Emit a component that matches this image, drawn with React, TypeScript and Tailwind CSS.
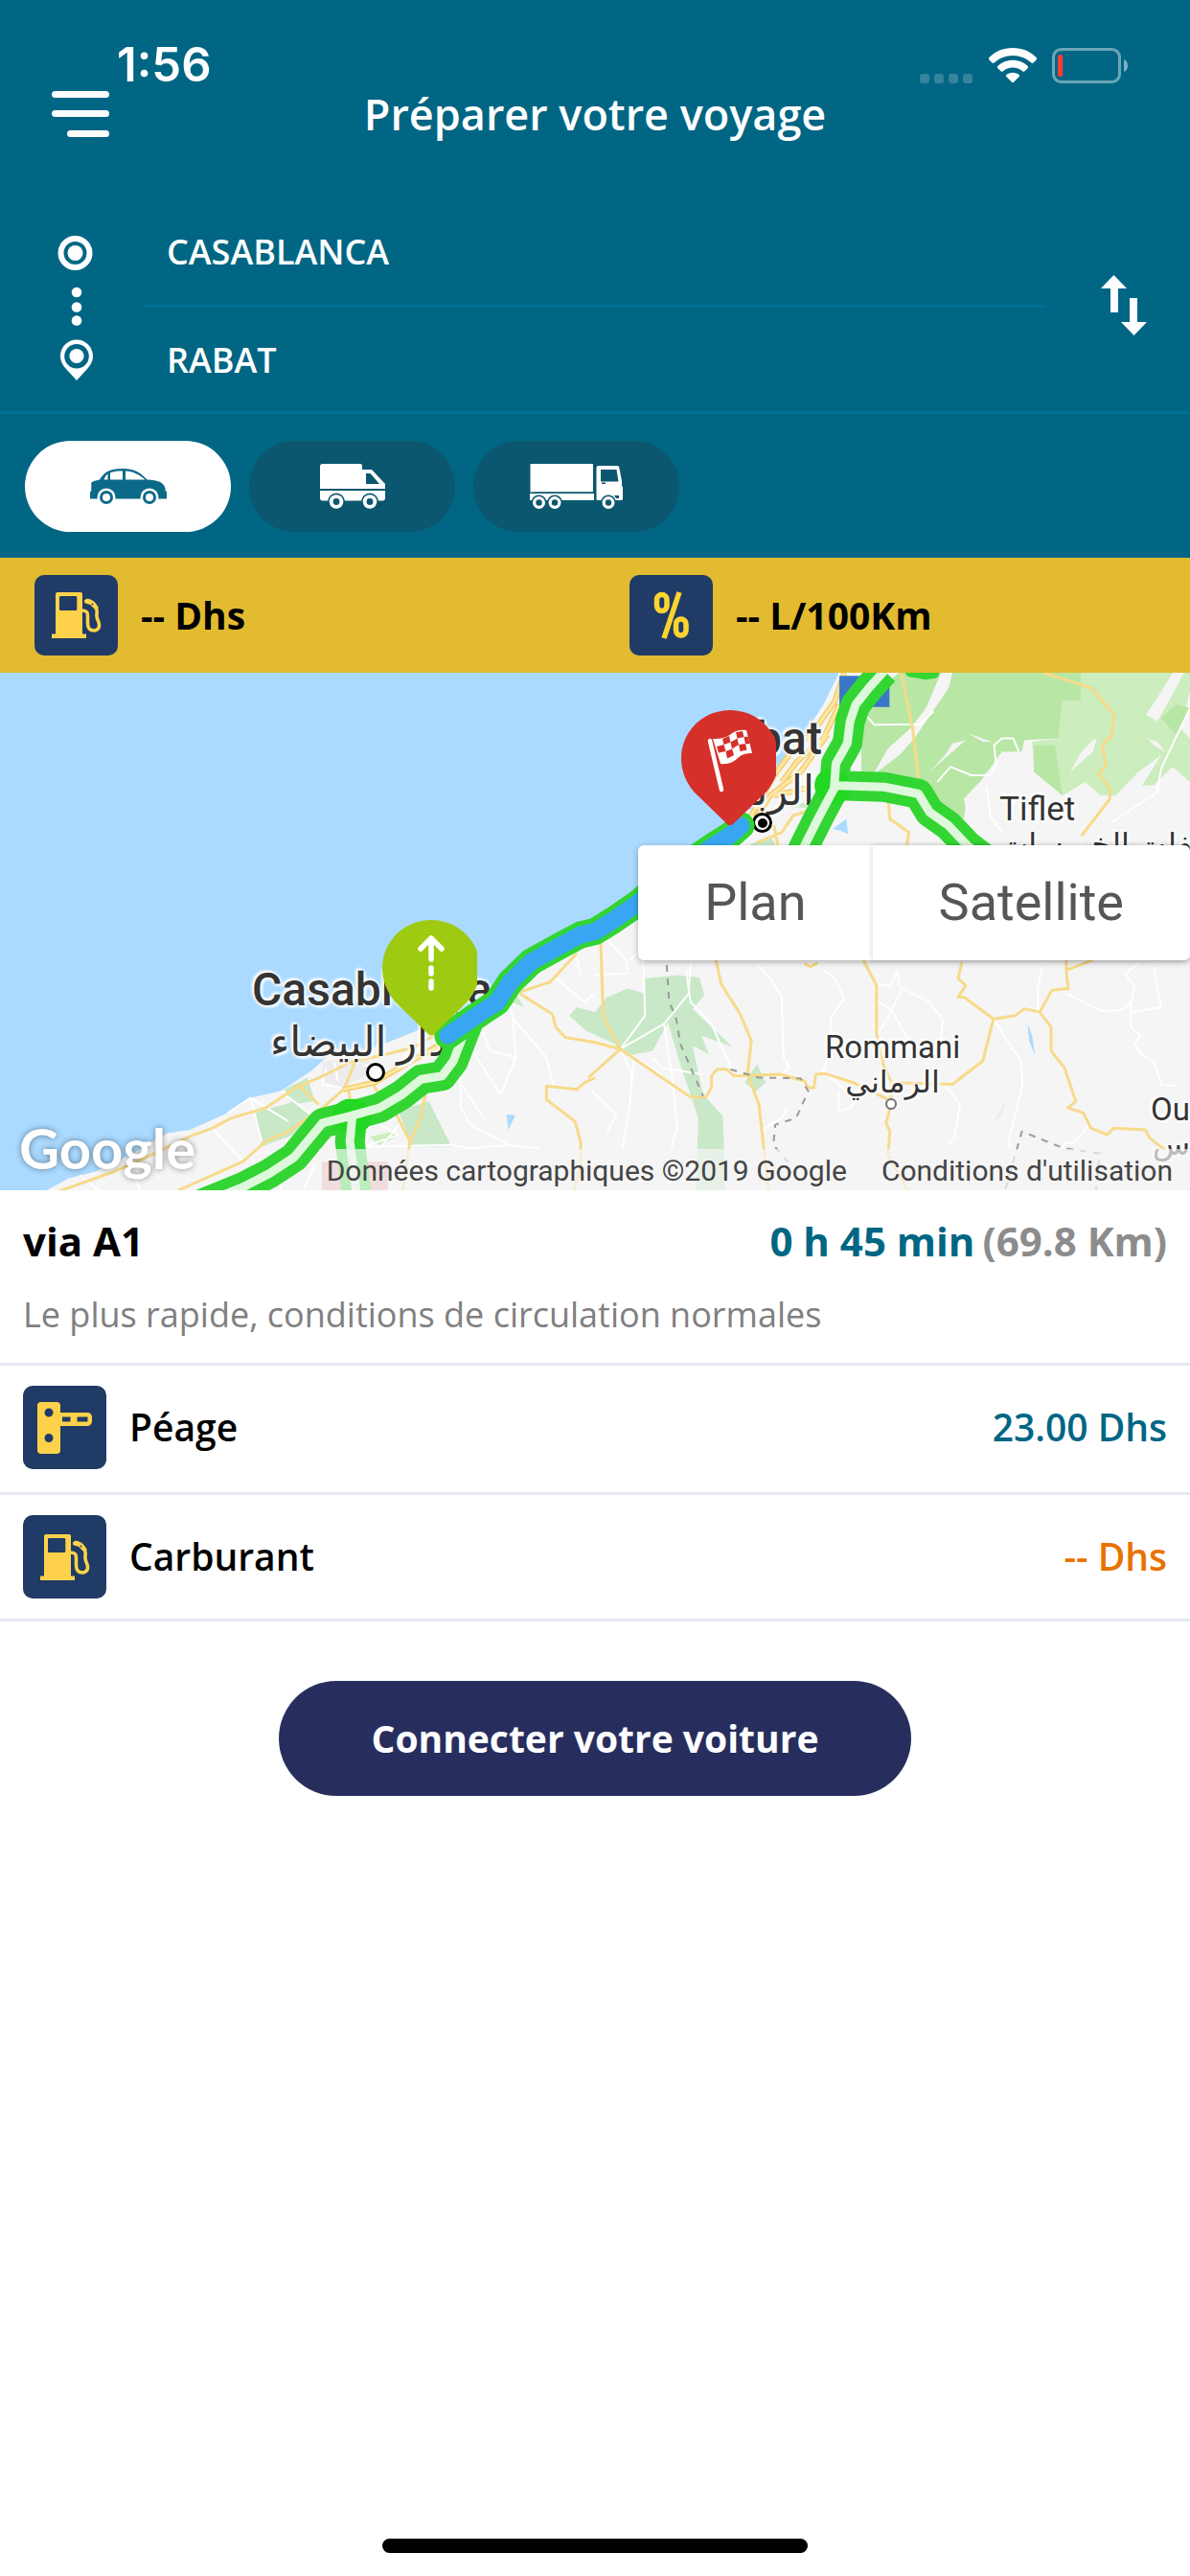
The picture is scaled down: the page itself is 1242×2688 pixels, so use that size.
import React, { useState } from "react";
import { clsx } from "clsx";

type Vehicle = "car" | "van" | "truck";
type MapKind = "plan" | "satellite";

function SignalDots() {
  return (
    <svg viewBox="0 0 56 10" className="w-14 h-[10px] fill-white/20" aria-hidden="true">
      {[0, 15, 30, 45].map((x) => (
        <rect key={x} x={x} width="10" height="10" rx="3" />
      ))}
    </svg>
  );
}

function WifiIcon() {
  return (
    <svg viewBox="0 0 50 37" className="w-[50px] h-[37px] fill-white" aria-hidden="true">
      <path d="M25 0C15 0 6.500 3.700.6 9.800c-.8.800-.8 1.900-.1 2.600l3 3.100c.6.600 1.500.6 2.100 0C10.600 10.700 17.400 7.900 25 7.900s14.400 2.800 19.400 7.600c.6.600 1.500.6 2.100 0l3-3.100c.7-.7.7-1.800-.1-2.600C43.500 3.700 35 0 25 0Z" />
      <path d="M25 12.700c-6 0-11.500 2.300-15.500 6-.8.800-.8 1.800-.1 2.500l3.100 3.100c.6.600 1.400.6 2.100.1 2.800-2.400 6.400-3.900 10.400-3.900s7.600 1.500 10.400 3.900c.7.500 1.500.5 2.100-.1l3.100-3.100c.7-.7.7-1.700-.1-2.500-4-3.700-9.500-6-15.500-6Z" />
      <path d="M25 25.800c-2.500 0-4.800.9-6.600 2.300-.7.600-.7 1.400-.1 2l5.500 5.500c.7.700 1.700.7 2.400 0l5.500-5.500c.6-.6.6-1.400-.1-2-1.800-1.400-4.100-2.300-6.600-2.300Z" />
    </svg>
  );
}

function BatteryIcon() {
  return (
    <svg viewBox="0 0 79 37" className="w-[79px] h-[37px]" aria-hidden="true">
      <rect x="1.500" y="1.500" width="69" height="34" rx="8" fill="none" stroke="#fff" strokeOpacity=".42" strokeWidth="3" />
      <rect x="6" y="7" width="5" height="23" rx="2" fill="#ff3b30" />
      <path d="M75 12c2.700 1.200 4 3.500 4 6.500S77.700 23.800 75 25Z" fill="#fff" fillOpacity=".5" />
    </svg>
  );
}

function MenuIcon() {
  return (
    <svg viewBox="0 0 60 48" className="w-[60px] h-12 fill-white" aria-hidden="true">
      <rect y="0" width="60" height="7" rx="3.500" />
      <rect y="20" width="60" height="7" rx="3.500" />
      <rect x="16" y="41" width="44" height="7" rx="3.500" />
    </svg>
  );
}

function RouteSteps() {
  return (
    <svg viewBox="0 0 48 158" className="w-12 h-[158px] fill-white" aria-hidden="true">
      <circle cx="22.500" cy="25" r="15" fill="none" stroke="#fff" strokeWidth="6" />
      <circle cx="22.500" cy="25" r="8" />
      <circle cx="24" cy="66" r="5.300" />
      <circle cx="24" cy="81.500" r="5.300" />
      <circle cx="24" cy="95.500" r="5.300" />
      <path
        fillRule="evenodd"
        d="M24 115.500c-9.400 0-17 7.600-17 17 0 5.500 2.600 9.500 6 13.500l11 12 11-12c3.400-4 6-8 6-13.500 0-9.400-7.600-17-17-17Zm0 4.500a12.800 12.800 0 1 1 0 25.600 12.800 12.800 0 0 1 0-25.600Z"
      />
      <circle cx="24" cy="132.500" r="7.600" />
    </svg>
  );
}

function SwapIcon() {
  return (
    <svg viewBox="0 0 48 63" className="w-12 h-[63px] fill-white" aria-hidden="true">
      <path d="M13.500 0 27 14h-9v25h-8V14H0Z" />
      <path d="M34.500 63 21 49h9V24h8v25h10Z" />
    </svg>
  );
}

function CarIcon() {
  return (
    <svg viewBox="0 0 80 37" className="w-20 h-[37px]" aria-hidden="true">
      <path
        fill="#0c6a89"
        d="M0 24.500 1.300 23v-8.500L4 13l6-1.500C15 4 19 0 34 0c13 0 18 4 25.500 11.500C71 12 77 14 78.500 21v2L80 24v7.500H0Z"
      />
      <path fill="#fff" d="M14.500 11.500c1-3 2.500-5 4-6v6ZM21 11.500V4.300c3.500-1.400 8-1.800 13-1.800v9ZM37 2.500c8.500.5 13.500 3.500 20.500 9H37Z" />
      {[17, 62].map((cx) => (
        <g key={cx}>
          <circle cx={cx} cy="30" r="9.500" fill="#fff" />
          <circle cx={cx} cy="30" r="7" fill="#0c6a89" />
          <circle cx={cx} cy="30" r="4" fill="#fff" />
        </g>
      ))}
    </svg>
  );
}

function VanIcon() {
  return (
    <svg viewBox="0 0 68 47" className="w-[68px] h-[47px]" aria-hidden="true">
      <path fill="#fff" d="M2.500 0H42c1.500 0 2 1 2 2v4h9c1 0 1.500.5 2 1l13 14v5H0V2.500C0 1 1 0 2.500 0ZM0 28h68v8c0 1.500-1 2.500-2.500 2.500h-63C1 38.500 0 37.500 0 36Z" />
      <path fill="#0b576f" d="M48 10h4.500l9.500 11H48Z" />
      {[17, 52].map((cx) => (
        <g key={cx}>
          <circle cx={cx} cy="39.500" r="9" fill="#0b576f" />
          <circle cx={cx} cy="39.500" r="7.300" fill="#fff" />
          <circle cx={cx} cy="39.500" r="3.400" fill="#0b576f" />
        </g>
      ))}
    </svg>
  );
}

function TruckIcon() {
  return (
    <svg viewBox="0 0 97 47" className="w-[97px] h-[47px]" aria-hidden="true">
      <path fill="#fff" d="M.5 0H66v29.500H.5ZM0 31h67v7H0Zm69.500-27c0-1 .5-2 2-2H91c1 0 2 .5 2.300 2L96 18v5l1 1v13l-1 1H71c-1 0-1.500-.5-1.500-1Z" />
      <path fill="#0b576f" d="M74 6h16.500l2 12.500H74ZM75 19.500h4V21h-4ZM88 33h5v3h-3ZM3.500 29.500H66V31H3.500Z" />
      {[9.500, 26, 82].map((cx) => (
        <g key={cx}>
          <circle cx={cx} cy="40.500" r="8" fill="#0b576f" />
          <circle cx={cx} cy="40.500" r="6.500" fill="#fff" />
          <circle cx={cx} cy="40.500" r="3.200" fill="#0b576f" />
        </g>
      ))}
    </svg>
  );
}

function FuelIcon() {
  return (
    <svg viewBox="0 0 52 48" className="w-[52px] h-12" aria-hidden="true">
      <path fill="#fdd24a" fillRule="evenodd" d="M6 0h24c1.200 0 2 .8 2 2v41.500h4V48H0v-4.500h4V2c0-1.200.8-2 2-2Zm3.500 4c-1 0-1.500.5-1.500 1.500v12c0 1 .5 1.500 1.500 1.500h15.300c1 0 1.500-.5 1.500-1.500v-12c0-1-.5-1.500-1.500-1.500Z" />
      <path fill="none" stroke="#fdd24a" strokeWidth="3.600" strokeLinecap="round" d="M31.500 19c4 0 6 1 6 5v8c0 5 2 8 6.500 8s6.500-4 5-8.500c-1-3-2.500-5-2-8.500.4-3 .5-5-1-7.500" />
      <path fill="#fdd24a" d="m34 8.500 2.200-1.700c3-.3 7 1.500 9.300 4.200l3.500 5-4.500 1.500-4.500-4.700c-2-.3-4.500-.8-6-2.300Z" />
      <circle cx="42.500" cy="12.500" r=".9" fill="#1f3b66" />
    </svg>
  );
}

function PercentIcon() {
  return (
    <svg viewBox="0 0 38 50" className="w-[38px] h-[50px]" fill="none" stroke="#fdd42f" aria-hidden="true">
      <rect x="3.500" y="3.500" width="10.500" height="17" rx="5.200" strokeWidth="5.500" />
      <rect x="23.500" y="29" width="10.500" height="17" rx="5.200" strokeWidth="5.500" />
      <path d="M27 1 11 49" strokeWidth="5.500" />
    </svg>
  );
}

function TollIcon() {
  return (
    <svg viewBox="0 0 57 54" className="w-[57px] h-[54px]" aria-hidden="true">
      <path
        fill="#fdd24a"
        fillRule="evenodd"
        d="M3.500 0h17c2 0 3.500 1.500 3.500 3.500V11h28c2.800 0 5 2 5 4.500V20c0 2.800-2.200 5-5 5H24v25.500c0 2-1.500 3.500-3.500 3.500h-17C1.500 54 0 52.500 0 50.500v-47C0 1.500 1.500 0 3.500 0ZM12 6.500a4.500 4.500 0 1 0 0 9 4.500 4.500 0 0 0 0-9Zm0 26.500a4.500 4.500 0 1 0 0 9 4.500 4.500 0 0 0 0-9ZM26 15.500v5h8.500v-5Zm15.500 0v5h11v-5Z"
      />
    </svg>
  );
}

function IconTile({ children, className }: { children: React.ReactNode; className?: string }) {
  return (
    <span className={clsx("flex items-center justify-center w-[87px] shrink-0 rounded-[10px] bg-[#1f3b66]", className)}>
      {children}
    </span>
  );
}

const yellowRoads = [
  "M125 1560 300 1490 380 1450 500 1385 560 1360 610 1330 700 1300 780 1240 860 1200 920 1165 1000 1145 1090 1120 1180 1060 1270 985",
  "M470 1545 640 1460 700 1400 760 1370 850 1300 905 1245 985 1225 1050 1180 1160 1120",
  "M920 1250 925 1310M785 1230 840 1290M935 1165 910 1235M980 1225 1000 1260",
  "M1125 1240 1105 1340 1080 1400 1060 1560M1040 1310 1085 1410",
  "M1370 955 1450 925 1520 840M1370 960 1455 1020 1465 1060 1490 1090 1568 1105 1635 1125",
  "M1568 1210 1540 1225 1520 1245 1440 1235 1440 1275 1515 1340 1530 1400 1530 1470 1510 1560",
  "M1583 810 1590 1030 1635 1125 1550 1210",
  "M1635 1125 1770 1230 1820 1268 1860 1268 1875 1240 1875 1205 1890 1185 1915 1185 1935 1205 2055 1200 2120 1220 2130 1240 2145 1240 2150 1200 2175 1198 2250 1225 2350 1280",
  "M1885 850 1900 930 1950 1020 1980 1100 1970 1200 2000 1290 2025 1545",
  "M2275 860 2310 935 2310 1080 2330 1180 2350 1225 2510 1230 2590 1160 2618 1035 2540 970 2525 970 2545 935 2525 915 2535 865",
  "M2618 1035 2675 1025 2700 1005 2740 1015 2770 1060 2770 1130 2805 1180 2835 1280 2815 1300 2855 1315 2875 1360 2918 1380 2935 1360 3018 1365 3030 1390 3070 1425",
  "M2740 1015 2772 950 2815 945 2810 890 2880 860M2810 890V860",
  "M2348 1230 2348 1290 2335 1345 2345 1370 2340 1440 2395 1550",
  "M2375 5 2385 60 2405 170 2420 320M2340 370 2345 440 2395 480 2390 520",
  "M2750 5 2875 50 2935 130 2930 190 2905 220 2915 280 2895 305 2925 350 2925 380 2850 490",
  "M1995 510 2060 480 2090 430 2150 410M2040 460 2050 520M2120 870 2135 880 2155 868",
];

const cityRoads = [
  "M2225 5 2200 90 2150 170 2080 250 2040 310 1980 430",
  "M2212 100 2170 200 2100 270 2060 330",
  "M2180 190 2110 300 2030 370 1990 440",
  "M2040 370 2120 350 2140 345",
  "M905 1245 985 1225 1170 1105",
];

const whiteRoads = [
  "M210 1500 260 1545M330 1450 370 1545M560 1360 640 1460M660 1270 690 1400M600 1315 660 1270 760 1340M740 1250 830 1330",
  "M860 1180 850 1230 900 1240M880 1160 890 1220M960 1170 1000 1190M1000 1350 1050 1380 960 1415 1190 1410 1240 1420 1340 1410 1420 1420",
  "M1000 1420 1060 1340M800 1545 830 1470M730 1430 740 1545M1100 1430 1140 1545",
  "M1210 1140 1215 1300 1240 1350 1340 1410M1215 1230 1280 1340M1250 1140 1320 1260M1320 1260 1360 1150 1350 1020 1330 960",
  "M1350 1030 1440 1150 1460 1240M1360 1150 1290 1130 1270 1060M1460 910 1540 985 1568 960M1520 850 1530 910",
  "M1600 800 1650 860 1655 900 1568 905M1660 860 1690 830",
  "M1635 1125 1700 1025 1695 860M1635 1125 1750 1050 1815 960 1820 870M1635 1125 1730 1190 1770 1240M1635 1125 1665 1200 1660 1290 1640 1420",
  "M1808 890 1820 985 1875 1050 1930 1190M1750 1050 1770 1200 1785 1350 1770 1420M1560 1250 1625 1320 1600 1370M1720 1150 1740 1180 1850 1200M1670 1160 1660 1290",
  "M1995 870 2040 930 2060 970 2065 1150 2080 1180 2050 1210M2170 890 2200 915 2225 975 2190 1030 2190 1120 2170 1190 2240 1260",
  "M2310 935 2345 935 2365 895 2370 940 2450 985 2485 1040 2480 1100M2310 980 2350 1010 2400 1110M2375 950 2345 1020 2310 1085",
  "M2210 1250 2210 1310 2240 1300 2270 1250M2010 1365 2060 1330 2075 1300M2490 1230 2530 1290 2515 1390 2500 1410",
  "M2620 1040 2690 1160 2695 1230 2660 1390 2660 1420M2735 1010 2735 950 2745 880",
  "M2810 960 2900 1010 2950 1010 2980 990 2990 940 2965 900 3000 870M2980 990 2980 1060 3005 1085 2990 1110 3005 1140 3040 1160 3060 1230 3100 1235M3040 880 3060 1000 2985 1015",
  "M2870 1350 2835 1400 2805 1405 2800 1420",
  "M2280 130 2305 160 2425 158 2460 120M2505 285 2560 310 2610 310 2625 280 2620 220 2640 200 2670 200 2685 240",
  "M3136 110 3060 290 3050 360 2970 420 2930 450M2600 345 2610 430 2640 480M2505 285 2470 330",
];

function Terrain() {
  return (
    <svg
      viewBox="0 5 3136 1540"
      preserveAspectRatio="none"
      className="absolute inset-0 w-full h-full [&_path]:[vector-effect:non-scaling-stroke]"
      strokeLinejoin="round"
      aria-hidden="true"
    >
      <path fill="#f5f5f5" d="M115 1550 180 1510 250 1490 350 1435 440 1375 500 1365 600 1315 660 1270 740 1250 820 1190 860 1150 960 1130 1010 1110 1110 1065 1180 1030 1270 970 1400 850 1568 760 1682 670 1850 510 1940 430 2000 400 2050 270 2130 170 2170 100 2205 20 2210 5H3136V1545Z" />
      <path fill="#ececec" d="M850 1165 960 1135 990 1190 900 1240 850 1220ZM2615 1350 2650 1280 2640 1320Z" />

      {/* Forests */}
      <path fill="#b8e6a5" d="M2270 110 2330 40 2370 5H2848V88H2800L2790 200 2700 205 2690 250 2600 300 2545 400 2540 440 2495 410 2430 330 2270 300Z" />
      <path fill="#ccedbd" d="M2848 5H3136V60L3110 170 3136 200V330L3090 285 3040 340 3010 340 3060 250 3000 300 2940 370 2900 370 2860 330 2800 370 2725 300 2720 210 2790 200 2800 88H2848Z" />
      <path fill="#b8e6a5" d="M2725 220H2780L2800 370 2725 300ZM3060 140 3100 100 3136 110 3100 190Z" />
      <path fill="#f5f5f5" d="M2480 5H2510L2500 50 2410 200 2370 250 2300 310 2340 230 2400 170 2440 110ZM2700 240 2670 300 2600 330 2550 440 2540 380 2590 320 2640 240ZM3090 5H3120L3080 90 3050 150 3020 130 3050 80ZM2550 185 2590 210 2615 212 2575 195ZM3025 200 3050 210 3070 240 3040 220ZM2510 215 2545 205 2450 300 2490 250ZM2880 205 2890 200 2880 240 2820 300 2850 240Z" />
      <path fill="#c8e8c8" d="M1698 915 1788 905 1843 912 1856 965 1825 1005 1930 1118 1848 1085 1868 1140 1825 1115 1853 1260 1905 1325 1912 1545H1835L1840 1330 1790 1160 1760 1045 1720 1130 1650 1145 1620 1110 1545 1070 1500 1025 1520 1000 1568 1015 1600 970 1655 945 1698 960Z" />
      <path fill="#c8e8c8" d="M1962 1225 1995 1170 2018 1225 1993 1250ZM670 1315 780 1280 845 1350 690 1415ZM750 1245 810 1210 830 1280 770 1290ZM1050 1310 1130 1280 1190 1415H1085ZM1320 970 1360 960 1380 1000ZM1970 520 2030 490 2045 520ZM2080 395 2140 390 2140 405 2085 408Z" />
      <path fill="#ccedbd" d="M975 1385 1040 1370 1055 1380 1000 1412Z" />
      <path fill="#aadaff" d="M2195 470 2230 440 2235 485 2215 475ZM1335 1320 1358 1322 1340 1365ZM2708 1050 2720 1085 2728 1145 2712 1100ZM2045 290 2060 240 2085 250 2060 290Z" />

      <path fill="none" stroke="#fff" strokeWidth="2" d={whiteRoads.join("")} />
      <path fill="none" stroke="#f7da8a" strokeWidth="3" d={yellowRoads.join("")} />
      <path fill="none" stroke="#f3cd6d" strokeWidth="6" d={cityRoads.join("")} />
      <path fill="none" stroke="#fce7a4" strokeWidth="3" d={cityRoads.join("")} />
      <path
        fill="none"
        stroke="#9a9a9a"
        strokeWidth="2"
        strokeDasharray="7 7"
        d="M1757 875 1763 980 1783 1040 1793 1110 1853 1265M1925 1185 2000 1210 2110 1212 2130 1250 2098 1330 2043 1350 2038 1410 2088 1475M2650 1540 2693 1370 2803 1420 2898 1435 2888 1545"
      />
      <path fill="#e8a3a8" d="M848 1460H1023V1545H848Z" />
      <path fill="#3a76c8" d="M2212 14H2344V107H2212Z" />
    </svg>
  );
}

function TrafficLines() {
  const motorway =
    "M500 1600 645 1533 710 1495 775 1447 850 1345 920 1325 1000 1300 1060 1260 1110 1215 1165 1205 1195 1160 1222 1080 1240 1030M928 1330 922 1400 940 1560M2330 0 2290 50 2255 100 2240 150 2233 215 2203 275 2198 350 2160 430 2120 520 2090 590M2190 340 2330 345 2420 365 2450 420 2500 460 2550 520 2620 580";
  const trip = "M1180 1085 1250 1030 1310 985 1345 925 1400 865 1480 815 1530 785 1568 775 1618 740 1682 690 1790 590 1880 520 1925 488 1953 460";
  return (
    <svg
      viewBox="0 5 3136 1540"
      preserveAspectRatio="none"
      className="absolute inset-0 w-full h-full [&_path]:[vector-effect:non-scaling-stroke]"
      fill="none"
      strokeLinejoin="round"
      aria-hidden="true"
    >
      <path stroke="#32d532" strokeWidth="12" strokeLinecap="round" d="M2400 0 2440 8 2460 5" />
      <path stroke="#32d532" strokeWidth="31" d={motorway} />
      <path stroke="#22d822" strokeWidth="36" strokeLinecap="round" d="M920 1325 935 1325M2192 340 2198 345" />
      <path stroke="#def8dc" strokeWidth="9" d={motorway} />
      <path stroke="#32d532" strokeWidth="28" strokeLinecap="round" d={trip} />
      <path stroke="#38a6f2" strokeWidth="18" strokeLinecap="round" d={trip} />
    </svg>
  );
}

function StartPin() {
  return (
    <svg viewBox="0 0 99 120" className="absolute left-[399px] top-[258px] w-[99px] h-[120px]" aria-hidden="true">
      <path fill="#9ecb11" d="M51 0c28 0 51 22 51 50 0 14-5 25-13 35l-36 35h-4L13 85C5 75 0 64 0 50 0 22 23 0 51 0Z" />
      <path fill="none" stroke="#fff" strokeWidth="5.500" strokeLinecap="round" strokeLinejoin="round" d="M51 41V19M40 30l11-11 11 11M51 50v6M51 64v7" />
    </svg>
  );
}

function FinishPin() {
  return (
    <svg viewBox="0 0 99 120" className="absolute left-[711px] top-[39px] w-[99px] h-[120px]" aria-hidden="true">
      <path fill="#d6302a" d="M51 0c28 0 51 22 51 50 0 14-5 25-13 35l-36 35h-4L13 85C5 75 0 64 0 50 0 22 23 0 51 0Z" />
      <path fill="none" stroke="#fff" strokeWidth="4.500" strokeLinecap="round" d="M30 32 42 83" />
      <path fill="#fff" d="M33 30c8 0 14-1 19-5s10-5 16-4l6 24c-6 0-11 1-15 5-5 5-11 7-18 6Z" />
      <path fill="#d6302a" d="m43 30 7-3 1.500 6.500-7 2.500ZM57 23l7-1 1.500 6-7 1.500ZM37 38l7.500-2 2 7-7.500 1.500ZM51.500 33.500l7-4 1.500 6.500-7 4.500ZM65.500 28l4-.5 2 7.500-4.500.5ZM46.500 43l6.500-2.500 2 6.500-7 3.500ZM60 36l7-1 1.500 6.500-7 1.500Z" />
    </svg>
  );
}

const halo = "[text-shadow:0_0_4px_#fff,0_0_4px_#fff,2px_2px_3px_#fff,-2px_-2px_3px_#fff]";

function MapLabels() {
  return (
    <div className={clsx("absolute inset-0 font-[Roboto,'DejaVu_Sans',sans-serif] text-[#343434] whitespace-nowrap", halo)}>
      <div className="absolute left-[263px] top-[304px] flex flex-col items-center text-[48px] leading-[54px] font-medium">
        <span>Casablanca</span>
        <span className="text-[43px] font-normal" dir="rtl" lang="ar">الدار البيضاء</span>
      </div>
      <span className="absolute left-[382px] top-[407px] w-5 h-5 rounded-full border-[3px] border-black bg-white" />

      <div className="absolute left-[733px] top-[42px] flex flex-col items-end text-[48px] leading-[54px] font-medium">
        <span>Rabat</span>
        <span className="text-[43px] pr-2 font-normal" dir="rtl" lang="ar">الرباط</span>
      </div>
      <span className="absolute left-[785px] top-[146px] flex items-center justify-center w-[21px] h-[21px] rounded-full border-[3px] border-black bg-white">
        <span className="w-[10px] h-[10px] rounded-full bg-black" />
      </span>

      <div className="absolute left-[1043px] top-[123px] text-[35px] leading-10">
        <div>Tiflet</div>
        <div className="text-[32px] leading-8" dir="rtl" lang="ar">تيفلت الخميسات</div>
      </div>

      <div className="absolute left-[861px] top-[371px] flex flex-col items-center text-[33px] leading-10">
        <span>Rommani</span>
        <span className="text-[32px] leading-8" dir="rtl" lang="ar">الرماني</span>
      </div>
      <span className="absolute left-[924px] top-[444px] w-3 h-3 rounded-full border-2 border-[#707070] bg-white" />

      <div className="absolute right-0 top-[436px] flex flex-col items-end text-[33px] leading-10">
        <span>Ou</span>
        <span className="text-[32px] leading-8" dir="rtl" lang="ar">س</span>
      </div>
    </div>
  );
}

function RouteMap() {
  const [kind, setKind] = useState<MapKind>("plan");
  const kindButton = "h-[120px] px-[69px] bg-white text-[54px] leading-none text-[#565656]";

  return (
    <section className="relative h-[540px] overflow-hidden bg-[#aadaff] font-[Roboto,sans-serif]" aria-label="Carte">
      <Terrain />
      <MapLabels />
      <TrafficLines />
      <StartPin />
      <FinishPin />

      <div className="absolute right-0 top-[180px] flex rounded-md shadow-[0_2px_6px_rgba(0,0,0,0.3)]">
        <button type="button" aria-pressed={kind === "plan"} onClick={() => setKind("plan")} className={clsx(kindButton, "rounded-l-md")}>
          Plan
        </button>
        <button
          type="button"
          aria-pressed={kind === "satellite"}
          onClick={() => setKind("satellite")}
          className={clsx(kindButton, "rounded-r-md shadow-[-1px_0_5px_rgba(0,0,0,0.15)]")}
        >
          Satellite
        </button>
      </div>

      <span className="absolute left-5 bottom-1 font-[Lato,sans-serif] font-bold text-[58px] leading-[80px] text-white [text-shadow:0_0_6px_rgba(0,0,0,0.45)]">
        Google
      </span>
      <div className="absolute right-0 bottom-0 flex gap-9 h-[43px] pl-2 pr-[18px] pt-[2px] items-center bg-[#f5f5f5]/70 text-[30px] text-[#444]">
        <span>Données cartographiques ©2019 Google</span>
        <a href="#conditions">Conditions d'utilisation</a>
      </div>
    </section>
  );
}

const vehicles: { id: Vehicle; label: string; icon: React.ReactNode }[] = [
  { id: "car", label: "Voiture", icon: <CarIcon /> },
  { id: "van", label: "Camionnette", icon: <VanIcon /> },
  { id: "truck", label: "Camion", icon: <TruckIcon /> },
];

export default function App() {
  const [vehicle, setVehicle] = useState<Vehicle>("car");
  const [from, setFrom] = useState("CASABLANCA");
  const [to, setTo] = useState("RABAT");

  const swap = () => {
    setFrom(to);
    setTo(from);
  };

  return (
    <div className="flex flex-col min-h-screen bg-white font-['Open_Sans',sans-serif] text-black">
      <header className="bg-[#006684] text-white">
        <div className="flex items-center justify-between pt-11 pl-[122px] pr-[65px]">
          <span className="font-[Inter,sans-serif] font-semibold text-[49px] leading-[48px]">1:56</span>
          <div className="flex items-end gap-4">
            <SignalDots />
            <WifiIcon />
            <BatteryIcon />
          </div>
        </div>

        <div className="grid grid-cols-[60px_1fr_60px] items-center px-[54px]">
          <button type="button" aria-label="Menu">
            <MenuIcon />
          </button>
          <h1 className="text-center text-[45px] leading-[54px] font-semibold">Préparer votre voyage</h1>
        </div>

        <form className="flex items-center mt-[61px] pl-14 pr-[45px]" onSubmit={(e) => e.preventDefault()}>
          <RouteSteps />
          <div className="flex-1 flex flex-col ml-[46px] mr-[57px] text-[36px] font-semibold">
            <input
              aria-label="Départ"
              value={from}
              onChange={(e) => setFrom(e.target.value)}
              className="h-[114px] pl-6 border-b-[3px] border-[#007095] bg-transparent outline-none"
            />
            <input
              aria-label="Arrivée"
              value={to}
              onChange={(e) => setTo(e.target.value)}
              className="h-[108px] pl-6 bg-transparent outline-none"
            />
          </div>
          <button type="button" aria-label="Inverser" onClick={swap}>
            <SwapIcon />
          </button>
        </form>

        <div className="flex gap-[19px] px-[26px] pt-7 pb-[27px] border-t-[3px] border-[#007095]">
          {vehicles.map((v) => (
            <button
              key={v.id}
              type="button"
              aria-label={v.label}
              aria-pressed={vehicle === v.id}
              onClick={() => setVehicle(v.id)}
              className={clsx(
                "flex items-center justify-center w-[215px] h-[95px] rounded-full",
                vehicle === v.id ? "bg-white" : "bg-[#0b576f]"
              )}
            >
              {v.icon}
            </button>
          ))}
        </div>
      </header>

      <div className="grid grid-cols-2 py-[18px] bg-[#e3bb30] text-[39px] font-bold">
        <div className="flex items-center gap-6 pl-9">
          <IconTile className="h-[84px]">
            <FuelIcon />
          </IconTile>
          <span>-- Dhs</span>
        </div>
        <div className="flex items-center gap-6 pl-9">
          <IconTile className="h-[84px]">
            <PercentIcon />
          </IconTile>
          <span>-- L/100Km</span>
        </div>
      </div>

      <RouteMap />

      <section className="px-6 pt-[23px] pb-6 border-b-[3px] border-[#e6e9f3]">
        <div className="flex items-center justify-between text-[42px] leading-[60px] font-bold">
          <h2>via A1</h2>
          <p className="flex gap-2 text-[#006684]">
            0 h 45 min <span className="text-[#8c8c8c]">(69.8 Km)</span>
          </p>
        </div>
        <p className="mt-[21px] text-[36px] leading-[52px] text-[#808080]">Le plus rapide, conditions de circulation normales</p>
      </section>

      <dl className="text-[39px] font-semibold">
        <div className="flex items-center justify-between px-6 pt-[21px] pb-6 border-b-[3px] border-[#e6e9f3]">
          <dt className="flex items-center gap-6">
            <IconTile className="h-[87px]">
              <TollIcon />
            </IconTile>
            Péage
          </dt>
          <dd className="text-[#006684]">23.00 Dhs</dd>
        </div>
        <div className="flex items-center justify-between px-6 py-[21px] border-b-[3px] border-[#e6e9f3]">
          <dt className="flex items-center gap-6">
            <IconTile className="h-[87px]">
              <FuelIcon />
            </IconTile>
            Carburant
          </dt>
          <dd className="text-[#e87200]">-- Dhs</dd>
        </div>
      </dl>

      <button type="button" className="self-center mt-[62px] w-[660px] h-[120px] rounded-full bg-[#272e5e] text-[39px] font-bold text-white">
        Connecter votre voiture
      </button>

      <div className="self-center mt-auto mb-6 w-[444px] h-[15px] rounded-full bg-black" />
    </div>
  );
}
